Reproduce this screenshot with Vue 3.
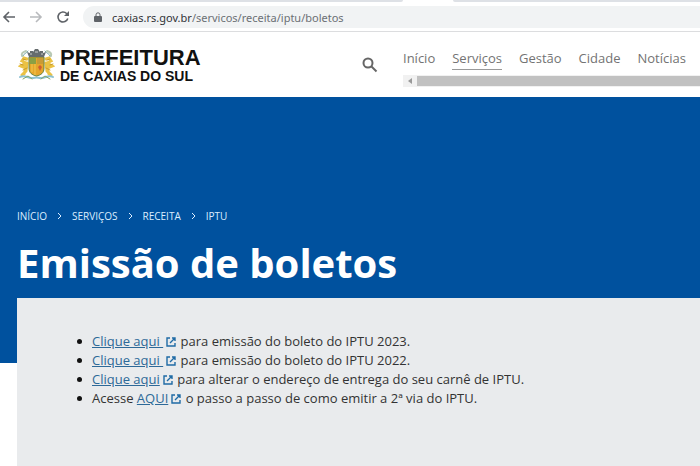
<template>
  <div class="browser">
    <div class="tab-strip">
      <div class="tab-side"></div>
      <div class="tab-active"></div>
      <div class="tab-side tab-rest"></div>
    </div>

    <div class="toolbar">
      <button type="button" class="tool-btn" aria-label="Voltar">
        <svg width="14" height="14" viewBox="0 0 14 14"><path d="M13 7H2M7 2L2 7l5 5" /></svg>
      </button>
      <button type="button" class="tool-btn" aria-label="Avançar" disabled>
        <svg width="14" height="14" viewBox="0 0 14 14"><path d="M1 7h11M7 2l5 5-5 5" /></svg>
      </button>
      <button type="button" class="tool-btn" aria-label="Recarregar">
        <svg width="14" height="14" viewBox="0 0 14 14">
          <path d="M11.800 8.500A5 5 0 1 1 10.600 3.500L12 5" />
          <path class="solid" d="M13 1v5H8z" />
        </svg>
      </button>
      <div class="address">
        <svg class="lock" width="8" height="10" viewBox="0 0 8 10">
          <rect x="0" y="4" width="8" height="6" rx="1" />
          <path d="M2 4.500V2.800a2 2 0 0 1 4 0v1.700" />
        </svg>
        <span class="url"><span class="host">caxias.rs.gov.br</span>/servicos/receita/iptu/boletos</span>
      </div>
    </div>

    <header class="site-header">
      <a href="#" class="brand">
        <svg class="crest" width="37" height="34" viewBox="0 0 37 34">
          <g fill="none" stroke-linecap="round">
            <path d="M8 3c-3 1-5 2-4 5M29 3c3 1 5 2 4 5" stroke="#b9c9b4" stroke-width="2" />
            <path d="M10 3c-2 3-4 2-5 5M27 3c2 3 4 2 5 5" stroke="#77a9aa" stroke-width="1" />
            <path d="M9 11L6 10l-2 3 4 2-5 3 5 2-2 6M9 15L8 23l-4 4" stroke="#ebc244" stroke-width="3" />
            <path d="M28 11l3-1 2 3-4 2 5 3-5 2 2 6M28 15l1 8 4 4" stroke="#ebc244" stroke-width="3" />
            <path d="M2 16l3 1M5 22l4-2M5 11l3 1M35 16l-3 1M32 22l-4-2M32 11l-3 1" stroke="#c79a2c" stroke-width="1" />
            <path d="M2 29c5-3 8 2 13 1 3-1 4-1 7 0 5 1 8-4 13-1" stroke="#8cc1d2" stroke-width="2" />
            <path d="M5 31l5-3 4 3M32 31l-5-3-4 3" stroke="#87a866" stroke-width="1" />
          </g>
          <path d="M11 9h15v11c0 5-3 7-7.500 8C14 27 11 25 11 20z" fill="#e5a52b" stroke="#63823f" />
          <path d="M12 10h6v6h-6z" fill="#8ba044" />
          <path d="M19 10h6v6h-6z" fill="#c99a35" />
          <path d="M14 16v8M17 16v11" stroke="#f2c850" />
          <path d="M20 19l2-2 2 2-2 4z" fill="#cf5c31" />
          <path d="M9 4l3 1V3h3v1l2-3h3l2 3V3h3v2l3-1-2 5H11z" fill="#666c6e" />
          <path d="M12 6h2M17 4h3M23 6h2" stroke="#ccd0ce" />
        </svg>
        <span class="brand-name">
          <span class="brand-top">PREFEITURA</span>
          <span class="brand-bottom">DE CAXIAS DO SUL</span>
        </span>
      </a>

      <button type="button" class="search-btn" aria-label="Buscar">
        <svg width="16" height="16" viewBox="0 0 16 16">
          <circle cx="6" cy="6" r="4.500" />
          <path d="M9.500 9.500l5 5" />
        </svg>
      </button>

      <div class="menu">
        <nav class="menu-links">
          <a
            v-for="item in menu"
            :key="item"
            href="#"
            :class="{ active: item === 'Serviços' }"
          >{{ item }}</a>
        </nav>
        <div class="scrollbar">
          <span class="scroll-arrow"></span>
          <div class="scroll-thumb"></div>
        </div>
      </div>
    </header>

    <main>
      <section class="hero">
        <nav class="breadcrumb">
          <template v-for="(crumb, index) in crumbs" :key="crumb">
            <svg v-if="index > 0" width="5" height="8" viewBox="0 0 5 8"><path d="M1 1l3 3-3 3" /></svg>
            <a href="#">{{ crumb }}</a>
          </template>
        </nav>
        <h1>Emissão de boletos</h1>
      </section>

      <section class="content">
        <ul>
          <li v-for="(item, index) in items" :key="index">
            {{ item.before }}<a href="#">{{ item.link }}<svg
              class="external"
              width="10"
              height="10"
              viewBox="0 0 10 10"
            ><path d="M4 1H1v8h8V6M6 1h3v3M9 1L4 6" /></svg></a>{{ item.after }}
          </li>
        </ul>
      </section>
    </main>
  </div>
</template>

<script setup>
const menu = ['Início', 'Serviços', 'Gestão', 'Cidade', 'Notícias']

const crumbs = ['INÍCIO', 'SERVIÇOS', 'RECEITA', 'IPTU']

const items = [
  { before: '', link: 'Clique aqui\u00a0', after: ' para emissão do boleto do IPTU 2023.' },
  { before: '', link: 'Clique aqui\u00a0', after: ' para emissão do boleto do IPTU 2022.' },
  { before: '', link: 'Clique aqui', after: ' para alterar o endereço de entrega do seu carnê de IPTU.' },
  { before: 'Acesse ', link: 'AQUI', after: ' o passo a passo de como emitir a 2ª via do IPTU.' }
]
</script>

<style>
body {
  margin: 0;
}
</style>

<style scoped>
.browser {
  display: flex;
  flex-direction: column;
  min-height: 100vh;
  overflow: hidden;
  background: #fff;
  color: #333;
  font-family: "Open Sans", "Noto Sans", sans-serif;
  font-size: 13px;
}

button {
  display: flex;
  padding: 0;
  border: none;
  background: none;
}

a {
  color: inherit;
  text-decoration: none;
}

.tab-strip {
  display: flex;
  height: 3px;
  background: #fff;
}

.tab-side {
  flex: 0 0 403px;
  height: 2px;
  background: #dee1e6;
  border-radius: 0 0 4px 0;
}

.tab-active {
  flex: 0 0 50px;
}

.tab-rest {
  flex: 1;
  border-radius: 0 0 0 4px;
}

.toolbar {
  display: flex;
  align-items: center;
  gap: 13px;
  height: 28px;
  padding-left: 2px;
  border-bottom: 1px solid #dcdddf;
}

.tool-btn svg {
  fill: none;
  stroke: #5f6368;
  stroke-width: 1.6;
}

.tool-btn:disabled svg {
  stroke: #b8babd;
}

.tool-btn .solid {
  fill: #5f6368;
  stroke: none;
}

.address {
  display: flex;
  flex: 1;
  align-items: center;
  gap: 10px;
  height: 22px;
  padding-left: 11px;
  border-radius: 11px 0 0 11px;
  background: #f1f3f4;
}

.lock {
  fill: #5f6368;
}

.lock path {
  fill: none;
  stroke: #5f6368;
}

.url {
  color: #6c7074;
  font-family: "Noto Sans", "Open Sans", sans-serif;
  font-size: 11px;
}

.host {
  color: #303236;
}

.site-header {
  display: flex;
  height: 65px;
}

.brand {
  display: flex;
  flex: 0 0 344px;
  align-items: flex-start;
  gap: 5px;
  box-sizing: border-box;
  padding: 16px 0 0 18px;
}

.brand-name {
  display: flex;
  flex-direction: column;
  color: #111;
  font-family: "Liberation Sans", Arial, sans-serif;
  font-weight: bold;
}

.brand-top {
  font-size: 22px;
  line-height: 20px;
}

.brand-bottom {
  font-size: 14px;
  line-height: 16px;
}

.search-btn {
  align-self: center;
  margin-left: 18px;
}

.search-btn svg {
  fill: none;
  stroke: #666;
  stroke-width: 2;
}

.menu {
  flex: 1;
  min-width: 0;
  margin-left: 25px;
  padding-top: 16px;
}

.menu-links {
  display: flex;
  gap: 17px;
  color: #737373;
  white-space: nowrap;
}

.menu-links a {
  padding-bottom: 1px;
  border-bottom: 1px solid transparent;
  line-height: 20px;
}

.menu-links .active {
  border-bottom-color: #999;
}

.scrollbar {
  display: flex;
  height: 12px;
  margin-top: 5px;
  background: #f1f1f1;
}

.scroll-arrow {
  width: 0;
  margin: 3px 5px;
  border: 3px solid transparent;
  border-left: none;
  border-right: 4px solid #999;
}

.scroll-thumb {
  flex: 1;
  margin: 1px 0;
  background: #c1c1c1;
}

main {
  display: flex;
  flex: 1;
  flex-direction: column;
}

.hero {
  height: 266px;
  box-sizing: border-box;
  padding: 109px 17px 0;
  background: #00519e;
  color: #fff;
}

.breadcrumb {
  display: flex;
  align-items: center;
  gap: 10px;
  color: #dceeff;
  font-size: 10px;
  line-height: 20px;
}

.breadcrumb svg {
  fill: none;
  stroke: currentColor;
}

h1 {
  margin: 12px 0 0;
  font-size: 40px;
  line-height: 50px;
}

.content {
  flex: 1;
  margin: -65px 0 0 17px;
  padding: 34px 16px 48px 75px;
  background: #e9ebed;
}

ul {
  margin: 0;
  padding: 0;
  list-style: none;
}

li {
  position: relative;
  line-height: 19px;
}

li::before {
  position: absolute;
  top: 7px;
  left: -15px;
  width: 5px;
  height: 5px;
  border-radius: 50%;
  background: #111;
  content: "";
}

li a {
  color: #2d6998;
  text-decoration: underline;
}

.external {
  margin: 0 1px 0 3px;
  fill: none;
  stroke: #1f6ba5;
  stroke-width: 1.4;
  vertical-align: -1px;
}
</style>
